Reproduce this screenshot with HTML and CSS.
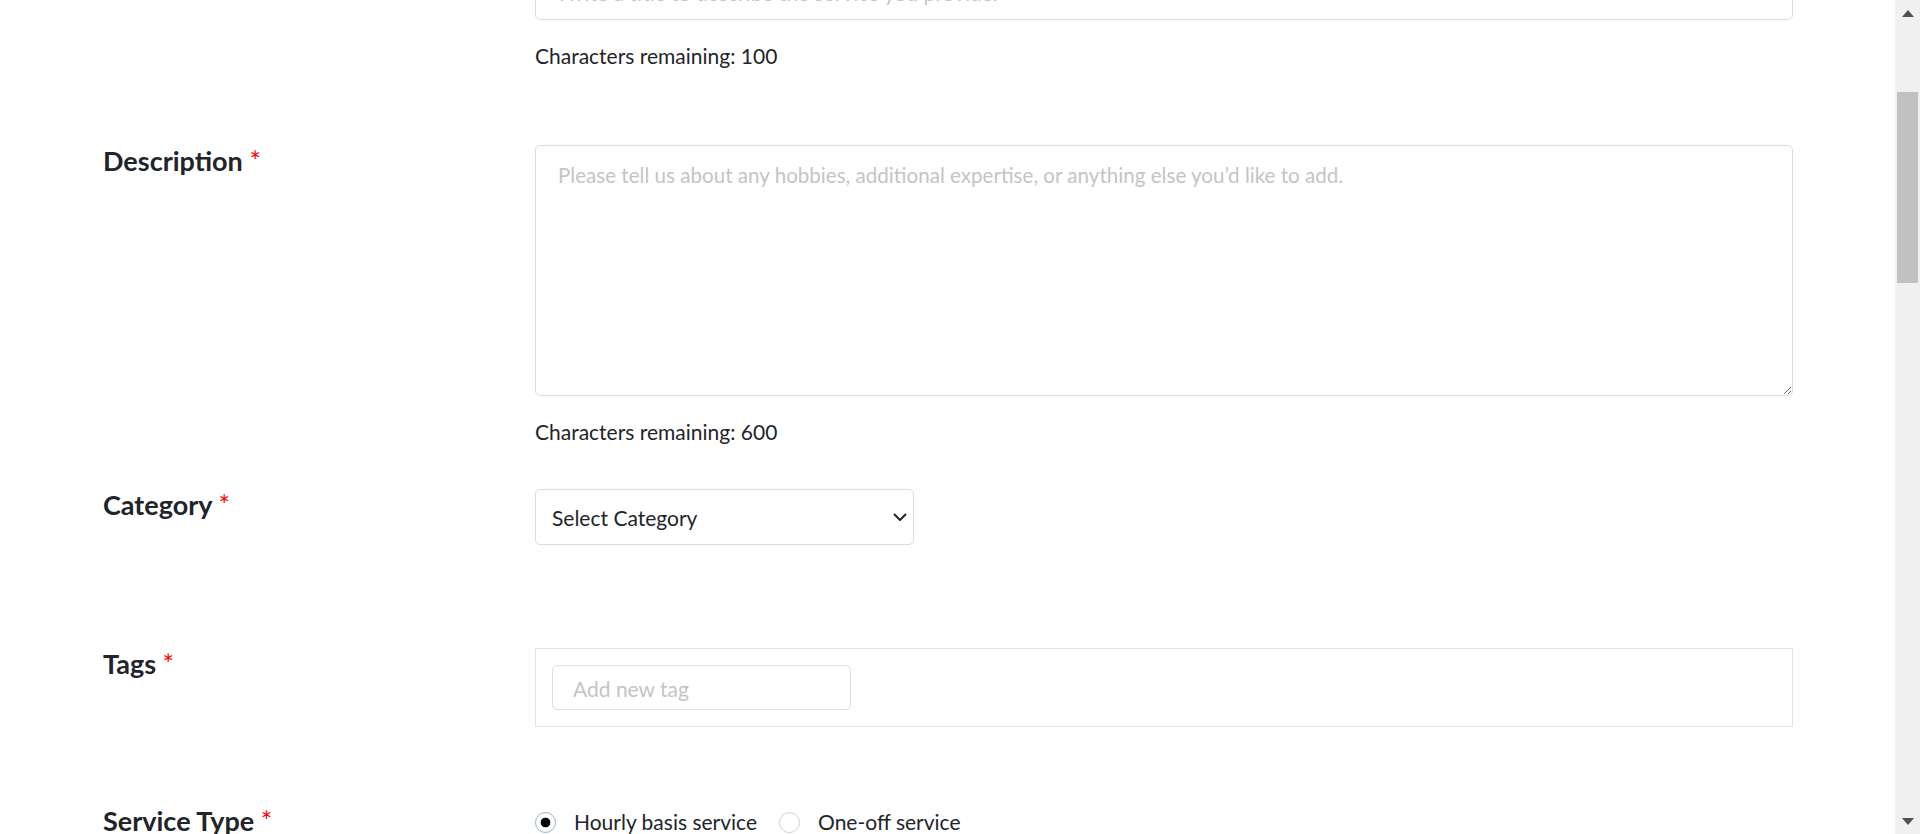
FILE: index.html
```html
<!DOCTYPE html>
<html lang="en">
<head>
<meta charset="utf-8">
<title>Create a service</title>
<link rel="stylesheet" href="styles.css">
</head>
<body>
<div class="window">
  <main class="viewport">
    <form class="form">
      <div class="row row-title">
        <label class="label" for="title">Title <span class="req">*</span></label>
        <div class="field">
          <input id="title" class="input input-title" type="text" placeholder="Write a title to describe the service you provide.">
          <p class="helper">Characters remaining: 100</p>
        </div>
      </div>

      <div class="row row-desc">
        <label class="label" for="desc">Description <span class="req">*</span></label>
        <div class="field">
          <textarea id="desc" class="input textarea" placeholder="Please tell us about any hobbies, additional expertise, or anything else you’d like to add."></textarea>
          <p class="helper">Characters remaining: 600</p>
        </div>
      </div>

      <div class="row row-cat">
        <label class="label" for="cat">Category <span class="req">*</span></label>
        <div class="field">
          <div class="select-wrap">
            <select id="cat" class="input select">
              <option>Select Category</option>
            </select>
            <svg class="chev" width="14" height="8" viewBox="0 0 14 8"><path d="M1 1l6 6 6-6" fill="none" stroke="#222" stroke-width="2"/></svg>
          </div>
        </div>
      </div>

      <div class="row row-tags">
        <label class="label" for="tag">Tags <span class="req">*</span></label>
        <div class="field">
          <div class="tagbox">
            <input id="tag" class="input tag-input" type="text" placeholder="Add new tag">
          </div>
        </div>
      </div>

      <div class="row row-type">
        <span class="label">Service Type <span class="req">*</span></span>
        <div class="field">
          <div class="radios">
            <label class="radio"><input type="radio" name="type" checked><span>Hourly basis service</span></label>
            <label class="radio"><input type="radio" name="type"><span>One-off service</span></label>
          </div>
        </div>
      </div>
    </form>
  </main>
  <div class="scrollbar">
    <div class="sb-btn"><svg width="12" height="7" viewBox="0 0 12 7"><path d="M0 7L6 0l6 7z" fill="#505050"/></svg></div>
    <div class="sb-track"><div class="sb-thumb"></div></div>
    <div class="sb-btn"><svg width="12" height="7" viewBox="0 0 12 7"><path d="M0 0h12L6 7z" fill="#505050"/></svg></div>
  </div>
</div>
</body>
</html>
```

FILE: styles.css
```css
* { box-sizing: border-box; }

html, body {
  margin: 0;
  padding: 0;
  background: #fff;
}

body {
  font-family: "Lato", "Noto Sans", sans-serif;
  color: #212529;
  font-size: 21px;
  line-height: 1.5;
}

.window {
  display: flex;
  height: 834px;
  overflow: hidden;
}

.viewport {
  flex: 1;
  height: 834px;
  overflow: hidden;
  padding: 0 102px 0 103px;
}

.form {
  margin: -36px 0 0;
}

.row {
  display: grid;
  grid-template-columns: 432px 1fr;
}

.row-title { margin-bottom: 73.5px; }
.row-desc { margin-bottom: 41.5px; }
.row-cat { margin-bottom: 103px; }
.row-tags { margin-bottom: 78px; }

.label {
  font-size: 27px;
  line-height: 31px;
  font-weight: 700;
  color: #212529;
}

.req {
  color: #ff0000;
  font-weight: 400;
}

.field {
  min-width: 0;
}

.input {
  display: block;
  width: 100%;
  font-family: inherit;
  font-size: 21px;
  color: #212529;
  background: #fff;
  border: 1px solid #dcdcdc;
  border-radius: 5px;
  outline: none;
}

.input::placeholder {
  color: #c4c4c4;
  opacity: 1;
}

.input-title {
  height: 56px;
  padding: 0 20px;
}

.textarea {
  height: 251px;
  padding: 16px 22px;
  font-size: 20.6px;
  line-height: 1.3;
  resize: both;
}

.helper {
  margin: 20px 0 0;
  font-size: 21px;
  line-height: 31.5px;
  color: #212529;
}

.select-wrap {
  position: relative;
  width: 379px;
}

.select {
  height: 56px;
  padding: 2px 40px 0 16px;
  appearance: none;
  -webkit-appearance: none;
  line-height: 1.5;
}

.chev {
  position: absolute;
  right: 7px;
  top: 24px;
  pointer-events: none;
}

.tagbox {
  border: 1px solid #e2e2e2;
  padding: 16px;
}

.tag-input {
  width: 299px;
  height: 45px;
  padding: 2px 20px 0;
  border-color: #dedede;
}

.radios {
  display: flex;
  align-items: center;
  height: 34px;
  gap: 22px;
}

.radio {
  display: flex;
  align-items: center;
  gap: 18px;
  font-size: 21px;
  color: #212529;
}

.radio input {
  appearance: none;
  -webkit-appearance: none;
  margin: 0;
  width: 21px;
  height: 21px;
  border-radius: 50%;
  border: 1px solid #cfcfcf;
  background: #fff;
}

.radio input:checked {
  border-color: #8fb5cc;
  background: radial-gradient(circle, #000 0 4.5px, #fff 5.2px);
}

.scrollbar {
  width: 25px;
  flex: none;
  background: #f0f0f0;
  display: flex;
  flex-direction: column;
}

.sb-btn {
  height: 26px;
  display: flex;
  align-items: center;
  justify-content: center;
  padding-left: 1px;
}

.sb-track {
  flex: 1;
  padding: 66px 2px 0 2px;
}

.sb-thumb {
  height: 191px;
  background: #c1c1c1;
}
```
